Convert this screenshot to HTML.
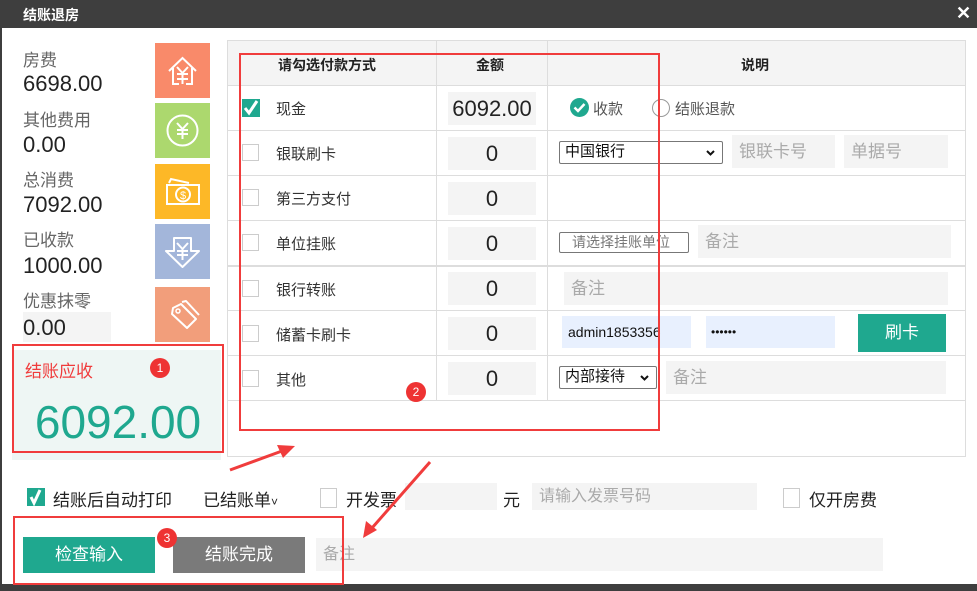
<!DOCTYPE html>
<html><head><meta charset="utf-8"><style>
*{margin:0;padding:0;box-sizing:border-box}
body{width:977px;height:591px;position:relative;background:#fff;font-family:"Liberation Sans","Noto Sans CJK SC",sans-serif;overflow:hidden;color:#333}
.a{position:absolute}
.lab{position:absolute;left:23px;font-size:17px;color:#666}
.val{position:absolute;left:23px;font-size:22px;color:#222}
.ic{position:absolute;left:155px;width:55px;height:55px}
.hl{position:absolute;left:228px;width:738px;height:1px;background:#ddd}
.cb{position:absolute;width:17px;height:17px;border:1px solid #ccc;background:#fff}
.t{position:absolute;font-size:15px;color:#333}
.amt{position:absolute;left:448px;width:88px;height:33px;background:#f4f4f4;font-size:22px;text-align:center;line-height:33px;color:#222}
.inp{position:absolute;background:#f4f4f4;color:#aaa;font-size:17px;padding-left:7px}
.sel{position:absolute;border:1px solid #777;border-radius:2px;background:#fff;font-size:15px;color:#111;padding-left:5px;line-height:20px}
.sel svg{position:absolute;right:7px;top:8px}
.badge{position:absolute;width:20px;height:20px;border-radius:50%;background:#ee3333;color:#fff;font-size:12px;text-align:center;line-height:20px}
.red{position:absolute;border:2px solid #f03c3c}
</style></head><body>
<div class="a" style="left:0;top:0;width:977px;height:28px;background:#3e3e3e"></div>
<div class="a" style="left:23px;top:5px;color:#fff;font-size:14px;font-weight:bold">结账退房</div>
<div class="a" style="left:956px;top:3px;color:#fff;font-size:18px;font-weight:bold">✕</div>
<div class="a" style="left:0;top:28px;width:2px;height:563px;background:#3e3e3e"></div>
<div class="a" style="left:0;top:584px;width:977px;height:7px;background:#3e3e3e"></div>

<div class="lab" style="top:46px">房费</div><div class="val" style="top:71px">6698.00</div>
<div class="lab" style="top:106px">其他费用</div><div class="val" style="top:132px">0.00</div>
<div class="lab" style="top:166px">总消费</div><div class="val" style="top:192px">7092.00</div>
<div class="lab" style="top:226px">已收款</div><div class="val" style="top:253px">1000.00</div>
<div class="lab" style="top:287px">优惠抹零</div>
<div class="a" style="left:23px;top:312px;width:88px;height:30px;background:#f4f4f4"></div>
<div class="val" style="top:315px">0.00</div>

<svg class="ic" style="top:43px" viewBox="0 0 55 55"><rect width="55" height="55" fill="#f98a6a"/><path d="M14 28 L27.5 15 L41 28 M18 25 V41 H24 M37 25 V41 H31 M22 24 L27.5 30 L33 24 M27.5 30 V41 M22 31 H33 M22 36 H33" stroke="#fff" stroke-width="2" fill="none"/></svg>
<svg class="ic" style="top:103px" viewBox="0 0 55 55"><rect width="55" height="55" fill="#acd86e"/><circle cx="27.5" cy="27.5" r="15" stroke="#fff" stroke-width="2" fill="none"/><path d="M22 20 L27.5 26 L33 20 M27.5 26 V36 M22 27 H33 M22 31 H33" stroke="#fff" stroke-width="2" fill="none"/></svg>
<svg class="ic" style="top:164px" viewBox="0 0 55 55"><rect width="55" height="55" fill="#fdb827"/><path d="M12 21 V40 H44 V21 Z M14 19 L16 15 L34 19" stroke="#fff" stroke-width="2" fill="none"/><circle cx="28" cy="30.5" r="7" stroke="#fff" stroke-width="2" fill="none"/><text x="28" y="35" fill="#fff" font-size="11" text-anchor="middle" font-family="Liberation Sans">$</text></svg>
<svg class="ic" style="top:224px" viewBox="0 0 55 55"><rect width="55" height="55" fill="#a3b6da"/><path d="M19 14 H36 V27 H44 L27.5 43 L11 27 H19 Z M22 19 L27.5 25 L33 19 M27.5 25 V36 M22 27 H33 M22 31 H33" stroke="#fff" stroke-width="2" fill="none" stroke-linejoin="round"/></svg>
<svg class="ic" style="top:287px" viewBox="0 0 55 55"><rect width="55" height="55" fill="#f29e7b"/><path d="M18 21 L26 17 L41 32 L32 41 L17 27 Z M27 15 L31 14 L44 28" stroke="#fff" stroke-width="2" fill="none" stroke-linejoin="round"/><circle cx="23" cy="24" r="2" stroke="#fff" stroke-width="1.5" fill="none"/></svg>

<div class="a" style="left:12px;top:350px;width:209px;height:110px;background:#eef6f4"></div>
<div class="red" style="left:12px;top:344px;width:212px;height:109px"></div>
<div class="a" style="left:25px;top:357px;color:#f03c3c;font-size:17px">结账应收</div>
<div class="badge" style="left:150px;top:358px">1</div>
<div class="a" style="left:12px;top:395px;width:212px;text-align:center;color:#1fa88f;font-size:46px">6092.00</div>

<div class="a" style="left:227px;top:40px;width:739px;height:417px;border:1px solid #ddd"></div>
<div class="a" style="left:228px;top:41px;width:737px;height:44px;background:#f4f4f4"></div>
<div class="hl" style="top:85px"></div><div class="hl" style="top:130px"></div><div class="hl" style="top:175px"></div><div class="hl" style="top:220px"></div>
<div class="hl" style="top:265px;height:2px"></div><div class="hl" style="top:310px"></div><div class="hl" style="top:355px"></div><div class="hl" style="top:400px"></div>
<div class="a" style="left:436px;top:41px;width:1px;height:359px;background:#ddd"></div>
<div class="a" style="left:547px;top:41px;width:1px;height:359px;background:#ddd"></div>
<div class="a" style="left:278px;top:55px;font-size:14px;font-weight:bold;color:#222">请勾选付款方式</div>
<div class="a" style="left:476px;top:55px;font-size:14px;font-weight:bold;color:#222">金额</div>
<div class="a" style="left:741px;top:55px;font-size:14px;font-weight:bold;color:#222">说明</div>

<svg class="a" style="left:242px;top:99px" width="18" height="18"><rect width="18" height="18" fill="#1fa88f"/><path d="M3 9 L7 14 L15 2" stroke="#fff" stroke-width="3" fill="none"/></svg>
<div class="t" style="left:276px;top:98px">现金</div><div class="amt" style="top:92px">6092.00</div>
<div class="cb" style="left:242px;top:144px"></div><div class="t" style="left:276px;top:143px">银联刷卡</div><div class="amt" style="top:137px">0</div>
<div class="cb" style="left:242px;top:189px"></div><div class="t" style="left:276px;top:188px">第三方支付</div><div class="amt" style="top:182px">0</div>
<div class="cb" style="left:242px;top:234px"></div><div class="t" style="left:276px;top:233px">单位挂账</div><div class="amt" style="top:227px">0</div>
<div class="cb" style="left:242px;top:280px"></div><div class="t" style="left:276px;top:279px">银行转账</div><div class="amt" style="top:272px">0</div>
<div class="cb" style="left:242px;top:325px"></div><div class="t" style="left:276px;top:324px">储蓄卡刷卡</div><div class="amt" style="top:317px">0</div>
<div class="cb" style="left:242px;top:370px"></div><div class="t" style="left:276px;top:369px">其他</div><div class="amt" style="top:362px">0</div>

<svg class="a" style="left:570px;top:98px" width="19" height="19"><circle cx="9.5" cy="9.5" r="9.5" fill="#1fa88f"/><path d="M4.5 9.5 L8 13 L14.5 6" stroke="#fff" stroke-width="2.5" fill="none"/></svg>
<div class="t" style="left:593px;top:98px;color:#555">收款</div>
<div class="a" style="left:652px;top:99px;width:18px;height:18px;border-radius:50%;border:1px solid #999"></div>
<div class="t" style="left:675px;top:98px;color:#555">结账退款</div>

<div class="sel" style="left:559px;top:141px;width:164px;height:23px">中国银行<svg width="9" height="6"><path d="M1 1 L4.5 4.5 L8 1" stroke="#111" stroke-width="2" fill="none"/></svg></div>
<div class="inp" style="left:732px;top:135px;width:103px;height:33px;line-height:33px">银联卡号</div>
<div class="inp" style="left:844px;top:135px;width:104px;height:33px;line-height:33px">单据号</div>
<div class="sel" style="left:559px;top:232px;width:130px;height:21px;color:#777;font-size:14px;padding-left:12px;line-height:19px">请选择挂账单位</div>
<div class="inp" style="left:698px;top:225px;width:253px;height:33px;line-height:33px">备注</div>
<div class="inp" style="left:564px;top:272px;width:384px;height:33px;line-height:33px">备注</div>
<div class="a" style="left:562px;top:316px;width:129px;height:32px;background:#e8f0fe;font-size:14px;line-height:32px;padding-left:6px;color:#111">admin1853356</div>
<div class="a" style="left:706px;top:316px;width:129px;height:32px;background:#e8f0fe;font-size:12px;line-height:32px;padding-left:5px;color:#111">••••••</div>
<div class="a" style="left:858px;top:314px;width:88px;height:38px;background:#1fa88f;color:#fff;font-size:17px;text-align:center;line-height:38px">刷卡</div>
<div class="sel" style="left:559px;top:366px;width:98px;height:23px">内部接待<svg width="9" height="6"><path d="M1 1 L4.5 4.5 L8 1" stroke="#111" stroke-width="2" fill="none"/></svg></div>
<div class="inp" style="left:666px;top:361px;width:280px;height:33px;line-height:33px">备注</div>

<div class="red" style="left:239px;top:53px;width:421px;height:378px"></div>
<div class="badge" style="left:406px;top:382px">2</div>

<svg class="a" style="left:27px;top:488px" width="18" height="18"><rect width="18" height="18" fill="#1fa88f"/><path d="M4 9 L7 15 L13 2" stroke="#fff" stroke-width="3" fill="none"/></svg>
<div class="a" style="left:53px;top:486px;font-size:17px;color:#222">结账后自动打印</div>
<div class="a" style="left:203px;top:486px;font-size:17px;color:#222">已结账单<span style="font-size:12px">˅</span></div>
<div class="cb" style="left:320px;top:488px;height:20px"></div>
<div class="a" style="left:346px;top:486px;font-size:17px;color:#222">开发票</div>
<div class="a" style="left:405px;top:483px;width:92px;height:27px;background:#f4f4f4"></div>
<div class="a" style="left:503px;top:486px;font-size:17px;color:#222">元</div>
<div class="inp" style="left:532px;top:483px;width:225px;height:27px;line-height:27px;font-size:16px">请输入发票号码</div>
<div class="cb" style="left:783px;top:488px;height:20px"></div>
<div class="a" style="left:809px;top:486px;font-size:17px;color:#222">仅开房费</div>

<div class="a" style="left:23px;top:537px;width:132px;height:36px;background:#1fa88f;color:#fff;font-size:17px;text-align:center;line-height:36px">检查输入</div>
<div class="a" style="left:173px;top:537px;width:132px;height:36px;background:#7a7a7a;color:#fff;font-size:17px;text-align:center;line-height:36px">结账完成</div>
<div class="inp" style="left:316px;top:538px;width:567px;height:33px;line-height:33px;font-size:16px">备注</div>
<div class="red" style="left:13px;top:516px;width:331px;height:69px"></div>
<div class="badge" style="left:157px;top:528px">3</div>

<svg class="a" style="left:0;top:0" width="977" height="591"><g stroke="#f03c3c" stroke-width="3" fill="#f03c3c">
<line x1="230" y1="470" x2="282" y2="451"/><polygon points="295,446 277,445 283,458" stroke="none"/>
<line x1="430" y1="462" x2="372" y2="528"/><polygon points="363,538 366,521 377,530" stroke="none"/></g></svg>
</body></html>
